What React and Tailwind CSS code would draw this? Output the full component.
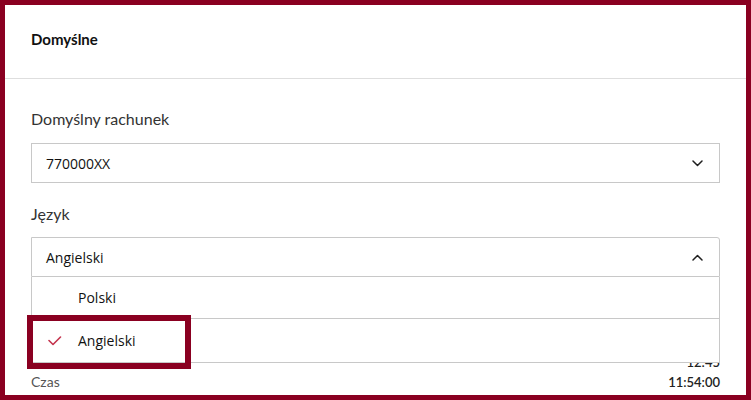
import React, { useState } from 'react';

const Chevron = ({ up }) => (
  <svg width="11" height="7" viewBox="0 0 11 7" className="shrink-0">
    <polyline
      points={up ? '1,6 5.5,1.5 10,6' : '1,1 5.5,5.5 10,1'}
      fill="none"
      stroke="#1f1f1f"
      strokeWidth="1.5"
      strokeLinecap="round"
      strokeLinejoin="round"
    />
  </svg>
);

const Check = () => (
  <svg width="14" height="10" viewBox="0 0 14 10" className="shrink-0">
    <polyline
      points="1,4.5 5,8.5 12.5,1"
      fill="none"
      stroke="#c4334d"
      strokeWidth="1.6"
      strokeLinecap="round"
      strokeLinejoin="round"
    />
  </svg>
);

const languages = ['Polski', 'Angielski'];

export default function App() {
  const [lang, setLang] = useState('Angielski');
  const [open, setOpen] = useState(true);

  return (
    <div className="relative w-[751px] h-[400px] overflow-hidden border-[5px] border-[#8a0021] bg-white font-['Lato',sans-serif] text-[#2b2b2b]">
      {/* Header */}
      <div className="h-[74px] border-b border-[#dedede] px-[26px] pt-[24px]">
        <h2 className="text-[15px] leading-[20px] font-bold text-[#111]">Domyślne</h2>
      </div>

      <div className="px-[26px]">
        <label className="block mt-[28px] mb-[12px] text-[16px] leading-[24px] text-[#333]">
          Domyślny rachunek
        </label>
        <div className="h-[40px] flex items-center justify-between border border-[#c8c8c8] pl-[14px] pr-[16px]">
          <span className="font-['Open_Sans',sans-serif] text-[14px] text-[#111]">770000XX</span>
          <Chevron />
        </div>

        <label className="block mt-[19px] mb-[11px] text-[16px] leading-[24px] text-[#333]">Język</label>
        <div className="relative z-10">
          <button
            onClick={() => setOpen(!open)}
            className="w-full h-[40px] flex items-center justify-between border border-[#c8c8c8] rounded-tr-[3px] bg-white pl-[14px] pr-[16px]"
          >
            <span className="font-['Open_Sans',sans-serif] text-[14px] text-[#111]">{lang}</span>
            <Chevron up={open} />
          </button>
          {open && (
            <ul className="absolute left-0 right-0 top-full bg-white border-x border-[#c8c8c8] font-['Open_Sans',sans-serif] text-[14px] text-[#111]">
              {languages.map((l, i) => (
                <li
                  key={l}
                  onClick={() => setLang(l)}
                  className={`flex items-center border-b border-[#c8c8c8] pl-[16px] ${i === 0 ? 'h-[42px]' : 'h-[44px]'}`}
                >
                  <span className="w-[30px] flex">{lang === l && <Check />}</span>
                  <span>{l}</span>
                </li>
              ))}
            </ul>
          )}
        </div>

        {/* Rows behind the dropdown */}
        <div className="mt-[76px] text-[14px] leading-[18px]">
          <div className="flex justify-between">
            <span className="text-[#555]">Pory</span>
            <span className="font-semibold text-[13px] text-[#222]">12:45</span>
          </div>
          <div className="flex justify-between mt-[2px]">
            <span className="text-[#555]">Czas</span>
            <span className="font-semibold text-[13px] text-[#222]">11:54:00</span>
          </div>
        </div>
      </div>

      {/* Annotation highlight */}
      <div className="absolute left-[22px] top-[310px] w-[164px] h-[54px] border-[6px] border-[#8a0021] z-20 pointer-events-none" />
    </div>
  );
}
